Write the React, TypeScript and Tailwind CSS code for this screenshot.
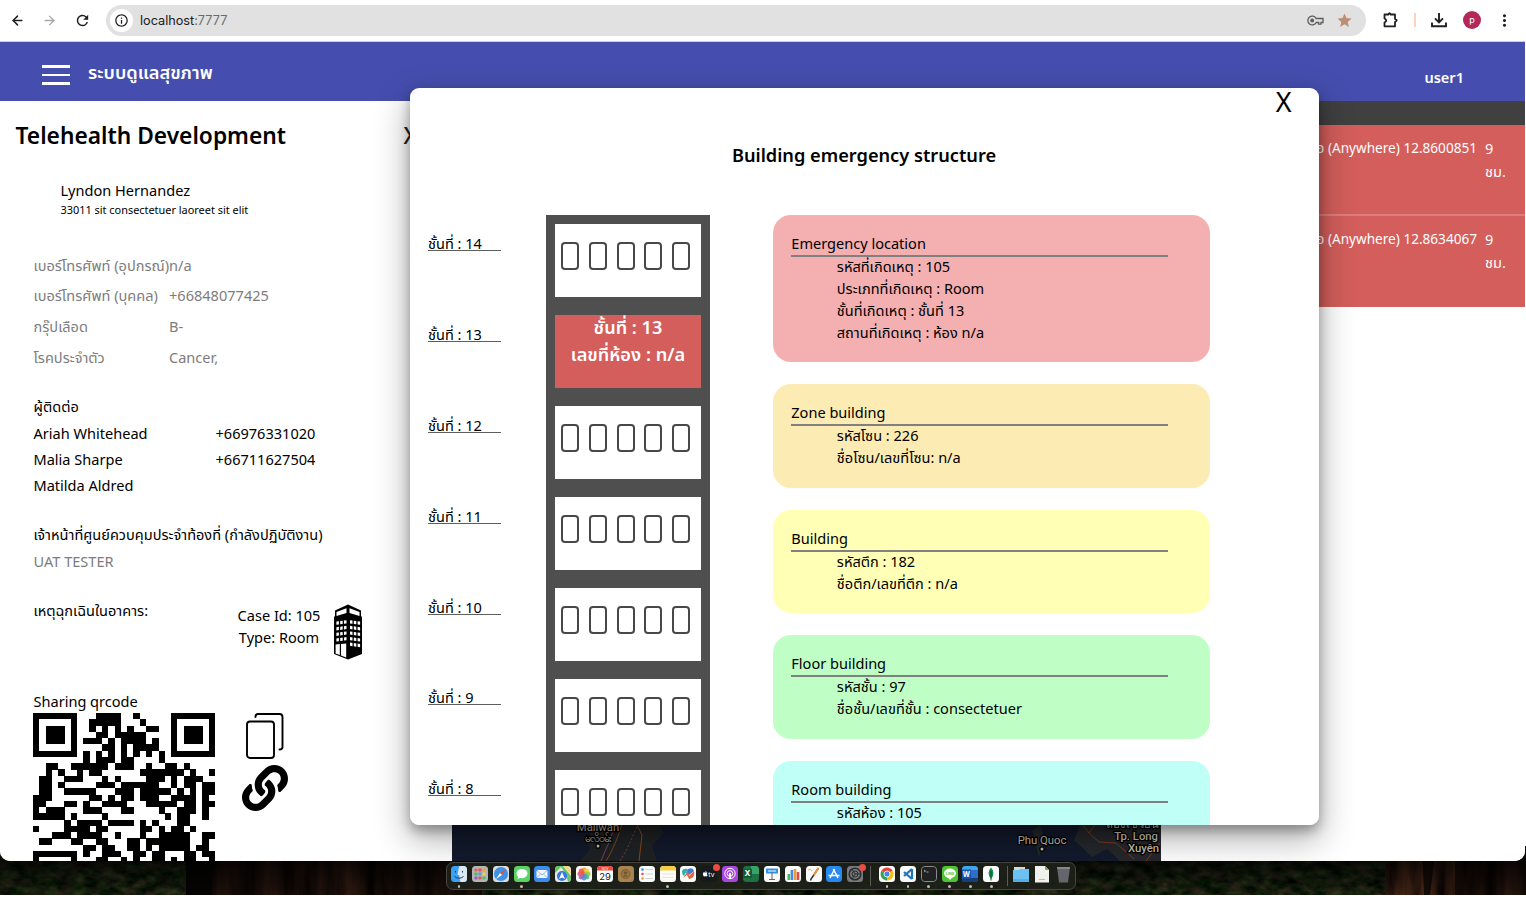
import React from "react";
import { ArrowLeft, ArrowRight } from "lucide-react";
import { MdRefresh, MdStar, MdMoreVert, MdInfoOutline } from "react-icons/md";
import { FaLink, FaApple } from "react-icons/fa";

const FLOORS = [14, 13, 12, 11, 10, 9, 8];

const DETAILS = [
  { title: "Emergency location", color: "bg-[#f4b0b0]", items: ["รหัสที่เกิดเหตุ : 105", "ประเภทที่เกิดเหตุ : Room", "ชั้นที่เกิดเหตุ : ชั้นที่ 13", "สถานที่เกิดเหตุ : ห้อง n/a"] },
  { title: "Zone building", color: "bg-[#fcebb3]", items: ["รหัสโซน : 226", "ชื่อโซน/เลขที่โซน: n/a"] },
  { title: "Building", color: "bg-[#ffffb5]", items: ["รหัสตึก : 182", "ชื่อตึก/เลขที่ตึก : n/a"] },
  { title: "Floor building", color: "bg-[#bfffc6]", items: ["รหัสชั้น : 97", "ชื่อชั้น/เลขที่ชั้น : consectetuer"] },
  { title: "Room building", color: "bg-[#bffff7]", items: ["รหัสห้อง : 105", "ชื่อห้อง/เลขที่ห้อง : n/a"] },
];

const PROFILE = [
  ["เบอร์โทรศัพท์ (อุปกรณ์)", "n/a"],
  ["เบอร์โทรศัพท์ (บุคคล)", "+66848077425"],
  ["กรุ๊ปเลือด", "B-"],
  ["โรคประจำตัว", "Cancer,"],
];

const CONTACTS = [
  ["Ariah Whitehead", "+66976331020"],
  ["Malia Sharpe", "+66711627504"],
  ["Matilda Aldred", ""],
];

const QR_ROWS: string[] = [
  "#######...####..#.....#######",
  "#.....#..#####...#....#.....#",
  "#.###.#..#.#.#.#..##..#.###.#",
  "#.###.#...##.#####....#.###.#",
  "#.###.#.###.#.####.#..#.###.#",
  "#.....#....##.#.####..#.....#",
  "#######.#.#.#.#.#.#.#.#######",
  "........#.###.##....#........",
  "..##..######.###..#..##.#....",
  "..#.#..#.##......#######.#..#",
  ".##..###...#.#....###.#.###..",
  ".##.#.....###.######..#.##.##",
  ".##..#####...###.#####.#.#.##",
  "###......##.#.##.###..####.#.",
  "##...##.#..####...#####.##.##",
  "#.###...###...##....#..###.#.",
  "#####.#....#.........#.##..#.",
  ".....#.####.####.#.#...##....",
  "#....####.##.....##.#.##.#...",
  "...###.####..#...#..#####..##",
  ".##...##..##...##.#######..#.",
  "........##.##..##.#.#####.##.",
  "#######.#..###..##.##...##.##",
  "#.....#...##..#.#..##.#.##..#",
];

function Toolbar() {
  return (
    <div className="flex h-[42px] shrink-0 items-center border-b border-[#cfcfd4] bg-white pb-px text-[#1f1f1f]">
      <ArrowLeft className="ml-[10px]" size={15} strokeWidth={2.4} />
      <ArrowRight className="ml-[17px] text-[#a8a8a8]" size={15} strokeWidth={2.2} />
      <MdRefresh className="ml-[17px]" size={17} />
      <div className="ml-[15px] flex h-[31px] w-[1260px] shrink-0 items-center rounded-full bg-[#e1e1e1] pr-[13px] pl-[4px]">
        <span className="flex size-[23px] items-center justify-center rounded-full bg-white">
          <MdInfoOutline size={15} />
        </span>
        <span className="ml-[7px] pt-px font-['Inter','Noto_Sans',sans-serif] text-[12.7px] text-[#202020]">
          localhost<span className="text-[#6a6a6a]">:7777</span>
        </span>
        <svg className="ml-auto" width="17" height="11" viewBox="0 0 17 11" fill="none" stroke="#5c5c5c" strokeWidth="1.3">
          <path d="M9.2 3.5A4.4 4.4 0 1 0 9.2 7.5H11.6V9.2H14V7.5H16V3.5Z" />
          <circle cx="5.2" cy="5.5" r="1.3" fill="#5c5c5c" />
        </svg>
        <MdStar className="ml-[12px] text-[#bd8f72]" size={17} />
      </div>
      <svg className="ml-[17px] shrink-0" width="16" height="16" viewBox="0 0 16 16" fill="none" stroke="#1f1f1f" strokeWidth="1.8" strokeLinejoin="round">
        <path d="M1.500 2.500H5.300Q6.500 0 7.700 2.500H12V7Q15.500 8 12 10V14.300H1.500V10.500Q5 8.500 1.500 6.500Z" />
      </svg>
      <span className="ml-[15px] h-[14px] w-[2px] bg-[#f9d5bf]" />
      <svg className="ml-[15px] shrink-0" width="16" height="16" viewBox="0 0 16 16" fill="none" stroke="#1f1f1f" strokeWidth="1.9">
        <path d="M8 1V10M4 6.3L8 10.3L12 6.3M1 10.5V14.3H15V10.5" />
      </svg>
      <span className="ml-[16px] flex size-[18px] shrink-0 items-center justify-center rounded-full bg-[#b3285c] font-['Inter',sans-serif] text-[9px] text-white">p</span>
      <MdMoreVert className="ml-[14px] shrink-0" size={19} />
    </div>
  );
}

function Header() {
  return (
    <header className="flex h-[59px] shrink-0 items-center bg-[#454eae] pl-[42px] text-white">
      <div className="flex w-[28px] flex-col gap-[6px] pt-[7px]">
        <span className="h-[2.400px] bg-white" />
        <span className="h-[2.400px] bg-white" />
        <span className="h-[2.400px] bg-white" />
      </div>
      <span className="ml-[18px] pt-[2px] text-[18.2px] font-semibold">ระบบดูแลสุขภาพ</span>
      <span className="mr-[61px] ml-auto pt-[13px] text-[14.56px] font-semibold">user1</span>
    </header>
  );
}

function BuildingIcon() {
  const wins: React.ReactNode[] = [];
  for (let r = 0; r < 5; r++)
    for (let c = 0; c < 3; c++) {
      if (r < 4) wins.push(<path key={`l${r}${c}`} d={`M${2.4 + c * 3.8} ${17.6 + r * 5.6 - c * 0.5}l2.5-.4v3.2l-2.5.4z`} />);
      wins.push(<path key={`r${r}${c}`} d={`M${16 + c * 3.8} ${16.2 + r * 5.6 + c * 0.5}l2.5.4v3.2l-2.5-.4z`} />);
    }
  return (
    <svg width="28" height="56" viewBox="0 0 28 56">
      <path d="M0 13 1 12V6.5L14 .5 27 6.5V12L28 13V50L14 55.5 0 50Z" fill="#000" />
      <g fill="#fff">
        {wins}
        <path d="M2.5 8 12.5 4.2V9L2.5 12ZM25.5 8 15.5 4.2V9L25.5 12Z" />
        <path d="M1.6 40.5 5.8 40V51L1.6 49.4ZM7 40 12.2 39.5V53.5L7 51.5Z" />
      </g>
    </svg>
  );
}

function QrCode() {
  return (
    <svg className="mr-[0.500px] -ml-[0.500px] shrink-0" width="182" height="150.6" viewBox="0 0 29 24" preserveAspectRatio="none" shapeRendering="crispEdges">
      {QR_ROWS.map((row, y) =>
        row.split("").map((cell, x) => (cell === "#" ? <rect key={`${x}-${y}`} x={x} y={y} width="1.02" height="1.02" /> : null)),
      )}
    </svg>
  );
}

function PatientPanel() {
  return (
    <aside className="flex h-full w-[452px] shrink-0 flex-col overflow-hidden bg-white pl-[33.5px] text-[14.56px] text-black">
      <div className="-ml-[18px] flex h-[40px] shrink-0 items-center justify-between pt-[30px] pr-[34.500px]">
        <h1 className="text-[22.75px] font-semibold">Telehealth Development</h1>
        <span className="text-[22.8px] font-medium text-[#222]">X</span>
      </div>
      <div className="ml-[27px] pt-[39px]">
        <p className="leading-[21px]">Lyndon Hernandez</p>
        <p className="text-[10.92px] leading-[17px]">33011 sit consectetuer laoreet sit elit</p>
      </div>
      <div className="pt-[32px] text-[#7d7d7d]">
        {PROFILE.map(([label, value]) => (
          <div key={label} className="flex h-[30.9px] items-center whitespace-nowrap">
            <span className="w-[135.5px]">{label}</span>
            <span>{value}</span>
          </div>
        ))}
      </div>
      <div className="pt-[19.500px]">
        <p className="h-[27.300px] leading-[26.3px]">ผู้ติดต่อ</p>
        {CONTACTS.map(([name, phone]) => (
          <div key={name} className="flex h-[26.3px] items-center">
            <span className="w-[182px]">{name}</span>
            <span>{phone}</span>
          </div>
        ))}
      </div>
      <div className="pt-[22px] leading-[26.3px]">
        <p>เจ้าหน้าที่ศูนย์ควบคุมประจำท้องที่ (กำลังปฏิบัติงาน)</p>
        <p className="text-[#7d7d7d]">UAT TESTER</p>
      </div>
      <div className="flex pt-[30.300px]">
        <span className="w-[204px] leading-[12.500px]">เหตุฉุกเฉินในอาคาร:</span>
        <div className="w-[83px] text-center leading-[22px]">
          <p>Case Id: 105</p>
          <p>Type: Room</p>
        </div>
        <div className="ml-[13px]">
          <BuildingIcon />
        </div>
      </div>
      <p className="h-[53px] shrink-0 pt-[29.500px] leading-[22px]">Sharing qrcode</p>
      <div className="flex">
        <QrCode />
        <div className="flex flex-col pl-[26.500px]">
          <svg className="ml-[4px]" width="38" height="47" viewBox="0 0 38 47" fill="none" stroke="#000" strokeWidth="1.9" strokeLinecap="round">
            <rect x="1" y="8.5" width="27" height="36.5" rx="3" />
            <path d="M9.5 4V3.5Q9.500 1 12 1H33.500Q36.500 1 36.500 4V34Q36.500 36.500 33.500 36.500" />
          </svg>
          <FaLink className="mt-[5px]" size={46} />
        </div>
      </div>
    </aside>
  );
}

function AlertRow({ text }: { text: string }) {
  return (
    <div className="flex h-[91px] justify-end border-b-2 border-[#dc7e7c] bg-[#d35e5b] pt-[12px] pr-[19px] leading-[22.5px] text-white last:border-[#d35e5b]">
      <span className="mr-[8px] text-[13.600px] whitespace-nowrap">{text}</span>
      <span className="w-[21px]">9 ชม.</span>
    </div>
  );
}

function MapStrip() {
  return (
    <svg className="block" width="709" height="136" viewBox="0 0 709 136" fontFamily="Roboto, 'Noto Sans', sans-serif">
      <rect width="709" height="136" fill="#121a2c" />
      <path d="M145 100Q132 110 138 124L128 136H205L200 120 212 108 205 96Z" fill="#1f2224" />
      <path d="M630 96H709V136H668L655 124 640 132 622 115Z" fill="#25272b" />
      <path d="M580 105L588 100 592 112 587 132Z" fill="#23282b" />
      <g fill="none" strokeWidth="1">
        <path d="M165 96Q157 118 149 136" stroke="#7c3f63" />
        <path d="M171 96Q164 120 154 136" stroke="#834522" />
        <path d="M186 98Q178 120 168 136" stroke="#744553" strokeDasharray="2 2" />
        <path d="M184 98L190 110 187 136" stroke="#8c4a20" />
        <path d="M628 96L637 108 647 117 664 118 682 134M637 108L646 96M694 136L708 118" stroke="#7d3b20" />
      </g>
      <g fill="#c4beae" stroke="#000" strokeWidth="2.5" paintOrder="stroke" fontSize="11.300">
        <text x="146" y="105.500" textAnchor="middle">Maliwan</text>
        <text x="146" y="116.500" textAnchor="middle" fontSize="10.500">မလိဝမ်း</text>
        <text x="590" y="119" textAnchor="middle">Phu Quoc</text>
        <text x="707" y="103" textAnchor="end" fontWeight="500">ลองเซวียน</text>
        <text x="706" y="115" textAnchor="end" fontWeight="500">Tp. Long</text>
        <text x="707" y="126.500" textAnchor="end" fontWeight="500">Xuyên</text>
        <circle cx="146" cy="121" r="1.5" />
        <circle cx="590" cy="124" r="1.5" />
      </g>
    </svg>
  );
}

function Dashboard() {
  return (
    <section className="flex min-w-0 flex-1 flex-col bg-white text-[14.56px]">
      <div className="h-[24px] shrink-0 bg-[#404040]" />
      <div>
        <AlertRow text="ขอความช่วยเหลือ (Anywhere) 12.8600851" />
        <AlertRow text="ขอความช่วยเหลือ (Anywhere) 12.8634067" />
      </div>
      <div className="mt-auto">
        <MapStrip />
      </div>
    </section>
  );
}

function Floor({ n }: { n: number }) {
  return (
    <div className="h-[90.9px] px-[9px] pt-[9px]">
      {n === 13 ? (
        <div className="h-[73px] bg-[#d35e5b] text-center text-[18.2px] font-semibold text-white">
          <p className="leading-[25px]">ชั้นที่ : 13</p>
          <p className="leading-[28.500px]">เลขที่ห้อง : n/a</p>
        </div>
      ) : (
        <div className="flex h-[73px] gap-[9.6px] bg-white pt-[18px] pl-[6.400px]">
          {[0, 1, 2, 3, 4].map((i) => (
            <span key={i} className="h-[28px] w-[18px] rounded-[4px] border-2 border-[#484848]" />
          ))}
        </div>
      )}
    </div>
  );
}

function BuildingDialog() {
  return (
    <div className="absolute top-[88px] left-[409.500px] flex h-[737px] w-[909px] flex-col overflow-hidden rounded-[9px] bg-white text-[14.56px] text-black">
      <div className="h-[29px] shrink-0 pr-[27px] text-right text-[27px] leading-[27px]">X</div>
      <h2 className="pt-[24px] text-center text-[18.2px] leading-[28px] font-semibold">Building emergency structure</h2>
      <div className="flex pt-[46.200px] pl-[18.500px]">
        <div className="w-[118px] pt-[18px]">
          {FLOORS.map((n) => (
            <div key={n} className="h-[90.85px]">
              <p className="h-[18px] w-[72.500px] border-b border-[#5e5e5e] leading-[20px]">ชั้นที่ : {n}</p>
            </div>
          ))}
        </div>
        <div className="w-[164px] bg-[#4f4f4f]">
          {FLOORS.map((n) => (
            <Floor key={n} n={n} />
          ))}
        </div>
        <div className="flex flex-col gap-[22px] pl-[63px]">
          {DETAILS.map((d) => (
            <div key={d.title} className={`w-[436.500px] rounded-[18px] px-[18.300px] pt-[18px] pb-[18.700px] ${d.color}`}>
              <p className="h-[23.800px] w-[376.500px] border-b-2 border-[#808080] leading-[20.600px]">{d.title}</p>
              <div className="-mt-[0.600px] pl-[45.500px] leading-[21.800px]">
                {d.items.map((item) => (
                  <p key={item}>{item}</p>
                ))}
              </div>
            </div>
          ))}
        </div>
      </div>
    </div>
  );
}

function Wallpaper() {
  return (
    <svg className="absolute top-[846px] left-0" width="1526" height="49" viewBox="0 0 1526 49">
      <defs>
        <filter id="leaves" x="0" y="0" width="100%" height="100%" colorInterpolationFilters="sRGB">
          <feTurbulence type="fractalNoise" baseFrequency="0.07 0.12" numOctaves="5" seed="7" />
          <feColorMatrix values="0.42 0 0 0 -0.11  0.3 0.17 0 0 -0.1  0.24 0 0 0 -0.06  0 0 0 0 1" />
        </filter>
        <filter id="bark" x="0" y="0" width="100%" height="100%" colorInterpolationFilters="sRGB">
          <feTurbulence type="fractalNoise" baseFrequency="0.05 0.008" numOctaves="4" seed="3" />
          <feColorMatrix values="0.8 0 0 0 -0.13  0.45 0 0 0 -0.08  0.28 0 0 0 -0.05  0 0 0 0 1" />
        </filter>
        <linearGradient id="shade" x1="0" x2="0" y1="0" y2="1">
          <stop offset="0.3" stopColor="#000" stopOpacity="0.75" />
          <stop offset="1" stopColor="#000" stopOpacity="0.15" />
        </linearGradient>
        <linearGradient id="trunk" x1="0" x2="1" y1="0" y2="0">
          <stop offset="0" stopColor="#000" stopOpacity="0.75" />
          <stop offset="0.35" stopColor="#000" stopOpacity="0.4" />
          <stop offset="1" stopColor="#000" stopOpacity="0.75" />
        </linearGradient>
      </defs>
      <rect width="1526" height="49" filter="url(#leaves)" />
      <rect x="186" width="30" height="49" fill="#070504" />
      <rect x="212" width="270" height="49" filter="url(#bark)" />
      <rect x="212" width="270" height="49" fill="url(#trunk)" />
      <rect x="1385" width="141" height="49" filter="url(#bark)" />
      <path d="M1422 0H1436L1430 49H1424Z" fill="#050403" opacity="0.8" />
      <rect x="1455" width="71" height="49" fill="#000" opacity="0.6" />
      <rect width="1526" height="49" fill="url(#shade)" />
    </svg>
  );
}

type DockItem = { bg: string; art?: React.ReactNode; dot?: boolean; badge?: boolean };

const petals = ["#f79b2e", "#f2d03b", "#9ccb4b", "#4bb98c", "#4a93d8", "#8b6cc1", "#d85a8a", "#ec5a43"];

const APPS: DockItem[] = [
  { bg: "#3aa0f2", dot: true, art: <><path d="M8.500 0H16V16H9.500Q8 12 8.200 9H6.500Q7 4 8.500 0Z" fill="#dbe9f5" /><path d="M4.500 5v1.500M11.500 5v1.500M3.500 10.500Q8 14 12.500 10.500" stroke="#173a5e" fill="none" /></> },
  { bg: "#b4b4b6", art: <>{["#e6654f", "#e95147", "#f2a33a", "#56b85b", "#4f9de0", "#f3d13f", "#8d62c9", "#e05a4f", "#4fbf68"].map((c, i) => <rect key={c} x={2.500 + (i % 3) * 4} y={2.500 + Math.floor(i / 3) * 4} width="3" height="3" rx=".7" fill={c} />)}</> },
  { bg: "#d8dde2", art: <><circle cx="8" cy="8" r="7" fill="#3d92e6" /><path d="M13 3 9 9 7 7Z" fill="#e9493f" /><path d="M3 13 7 7 9 9Z" fill="#fff" /></> },
  { bg: "#5cd264", dot: true, art: <><ellipse cx="8" cy="7.600" rx="5.500" ry="4.600" fill="#fff" /><path d="M4.500 10 3.500 13 7 11.500" fill="#fff" /></> },
  { bg: "#3c8cee", art: <><rect x="2.500" y="4" width="11" height="8" rx="1.500" fill="#f2f6fb" /><path d="M3 4.700 8 9 13 4.700M3 11.500 6.500 8M13 11.500 9.500 8" stroke="#8ca9c8" fill="none" strokeWidth=".8" /></> },
  { bg: "#e8e6de", art: <><path d="M0 0H7L0 7Z" fill="#5fc768" /><path d="M8 0 16 10V16H13Q11 6 5 0Z" fill="#65c671" /><path d="M9 0H12L16 5V8Z" fill="#f5d365" /><circle cx="7" cy="10" r="5" fill="#3578de" /><path d="M7 6 10 13 7 11.500 4 13Z" fill="#fff" /></> },
  { bg: "#f7f7f7", art: <>{petals.map((c, i) => <ellipse key={c} cx="8" cy="4.700" rx="2.400" ry="3.300" fill={c} opacity=".9" transform={`rotate(${i * 45} 8 8)`} />)}</> },
  { bg: "#ffffff", art: <><rect width="16" height="4.500" fill="#e94b41" /><text x="8" y="13.800" fontSize="9.500" textAnchor="middle" fill="#222" fontFamily="Inter, sans-serif">29</text><text x="8" y="3.600" fontSize="3" textAnchor="middle" fill="#fff" fontFamily="Inter, sans-serif">NOV</text></> },
  { bg: "#a8834f", art: <><circle cx="7.500" cy="8" r="4.500" fill="#977341" stroke="#6f532c" strokeWidth=".6" /><circle cx="7.500" cy="6.800" r="1.500" fill="#6f532c" /><path d="M5 10.500Q7.500 7.500 10 10.500" fill="#6f532c" /></> },
  { bg: "#fbfbfb", art: <>{["#3f8cf0", "#ec5249", "#f29a37"].map((c, i) => <g key={c}><circle cx="3.500" cy={3.500 + i * 4.500} r="1.300" fill={c} /><path d={`M6.500 ${3.500 + i * 4.500}H14`} stroke="#c8c8c8" strokeWidth=".8" /></g>)}</> },
  { bg: "#fbfaf4", dot: true, art: <><rect width="16" height="4.500" fill="#f8cd46" /><path d="M2 8H14M2 11.500H14" stroke="#ddd" strokeWidth=".7" /></> },
  { bg: "#fdfdfd", art: <><path d="M2 5Q3 2 8 3L4 10Q2 9 2 5Z" fill="#2cb3ab" /><path d="M8 3Q13 1 14 5L9 9 6 7Z" fill="#3e7cd8" /><path d="M3 12 8 5 9 10 14 5Q15 10 12 12L9 13 7 9Z" fill="#e8643a" /></> },
  { bg: "#151a1c", badge: true, art: <><FaApple x="1" y="4.500" size={6.500} color="#fff" /><text x="7.300" y="10.800" fontSize="6.800" fill="#fff" fontFamily="Inter, sans-serif">tv</text></> },
  { bg: "#a747df", art: <g fill="none" stroke="#fff"><circle cx="8" cy="7.500" r="5.200" /><circle cx="8" cy="7.500" r="2.800" /><path d="M8 7V13" strokeWidth="2" /></g> },
  { bg: "#1e7145", art: <><rect x="8" width="8" height="8" fill="#35a36a" /><rect y="3" width="9" height="9" fill="#125c34" /><text x="4.500" y="10.300" fontSize="8" textAnchor="middle" fontWeight="700" fill="#fff" fontFamily="Inter, sans-serif">X</text></> },
  { bg: "#fafafa", art: <><rect x="2" y="2.500" width="12" height="5" fill="#2f93e8" /><path d="M8 3V13M5 13.500H11" stroke="#666" /><path d="M4 5H12" stroke="#fff" /></> },
  { bg: "#fafafa", art: <><rect x="2.500" y="8" width="2.600" height="6" fill="#4abb57" /><rect x="5.600" y="4" width="2.600" height="10" fill="#3d92e6" /><rect x="8.700" y="3" width="2.600" height="11" fill="#f09b36" /><rect x="11.700" y="6" width="2.600" height="8" fill="#e04c48" /></> },
  { bg: "#fafafa", art: <><path d="M12.500 2 5 13 4.500 14.500" stroke="#333" strokeWidth="1.500" /><path d="M12.500 2 8 9" stroke="#ef9636" strokeWidth="2" /><path d="M2 4Q5 2 6 5" stroke="#f1ac5c" fill="none" /></> },
  { bg: "#2788ee", art: <path d="M8.700 3 4 12M7.300 3 12 12M2.500 9.500H13.500" stroke="#fff" strokeWidth="1.500" fill="none" /> },
  { bg: "#77797d", badge: true, art: <g fill="none" stroke="#2b2c2f"><circle cx="8" cy="8" r="5.800" strokeWidth="1.500" /><circle cx="8" cy="8" r="3" /><path d="M8 8H14M8 8 5 3M8 8 5 13" /></g> },
];

const RUNNING: DockItem[] = [
  { bg: "#fafafa", dot: true, art: <><path d="M8 8 2.400 4.800A6.500 6.500 0 0 1 13.600 4.800Z" fill="#e64235" /><path d="M8 8 13.600 4.800A6.500 6.500 0 0 1 8 14.500Z" fill="#fabb07" /><path d="M8 8 8 14.500A6.500 6.500 0 0 1 2.400 4.800Z" fill="#34a552" /><circle cx="8" cy="8" r="3" fill="#4285f3" stroke="#fff" strokeWidth=".8" /></> },
  { bg: "#fafafa", dot: true, art: <path d="M12 3 4 10M12 13 4 6M12 3V13" stroke="#2274b8" strokeWidth="2.200" fill="none" /> },
  { bg: "#202123", dot: true, art: <><rect x=".5" y=".5" width="15" height="15" rx="3" fill="none" stroke="#8b8b8b" /><path d="M3 4 4.500 5 3 6M5.500 6H7.500" stroke="#ddd" strokeWidth=".7" fill="none" /></> },
  { bg: "#50c332", dot: true, art: <><ellipse cx="8" cy="7.300" rx="6" ry="4.800" fill="#fff" /><path d="M5.500 11 8 14 10.500 11Z" fill="#fff" /><text x="8" y="8.700" fontSize="3.800" fontWeight="700" textAnchor="middle" fill="#50c332" fontFamily="Inter, sans-serif">LINE</text></> },
  { bg: "#2b6fc9", dot: true, art: <><rect width="16" height="4" fill="#41a5ee" /><rect y="12" width="16" height="4" fill="#153d7c" /><rect y="3.500" width="9" height="9" fill="#1b56ae" /><text x="4.500" y="10.700" fontSize="7" fontWeight="700" textAnchor="middle" fill="#fff" fontFamily="Inter, sans-serif">W</text></> },
  { bg: "#fafafa", dot: true, art: <><path d="M8 1.500Q13 7 8 13Q3 7 8 1.500Z" fill="#168a4f" /><path d="M8 5V14.500" stroke="#0a5a38" /></> },
];

function DockIcon({ item }: { item: DockItem }) {
  return (
    <div className="relative flex w-[20.87px] flex-col items-center">
      <svg width="16" height="16" viewBox="0 0 16 16" className="rounded-[3.500px]">
        <rect width="16" height="16" fill={item.bg} />
        {item.art}
      </svg>
      {item.dot && <span className="mt-[3px] size-[2.500px] rounded-full bg-[#bdbdb7]" />}
      {item.badge && <span className="absolute -top-[2px] right-0 size-[7px] rounded-full bg-[#ea4b42]" />}
    </div>
  );
}

function Dock() {
  return (
    <div className="absolute top-[862px] left-[446px] flex h-[28px] w-[630px] rounded-[7px] border border-[#45463f] bg-[#1e2119]/90 pt-[3px] pl-[1.500px]">
      {APPS.map((item, i) => (
        <DockIcon key={i} item={item} />
      ))}
      <span className="mr-[5.200px] ml-[4.700px] h-[20px] w-px bg-[#5a5c55]" />
      {RUNNING.map((item, i) => (
        <DockIcon key={i} item={item} />
      ))}
      <span className="mr-[3.500px] ml-[5px] h-[20px] w-px bg-[#5a5c55]" />
      <svg width="62" height="17" viewBox="0 0 62 17">
        <path d="M3 1H14V5H3Z" fill="#d9d9d4" />
        <path d="M2 4H8L9 3H18V16H2Z" fill="#6cc1f3" />
        <path d="M2 13H18V16H2Z" fill="#57aee4" />
        <path d="M24 0H34L38 4V16.500H24Z" fill="#f0f0ec" />
        <path d="M34 0 38 4H34Z" fill="#8ba84f" />
        <path d="M28 13.500H34" stroke="#bbb" />
        <path d="M46 1H59L57 16.500H48Z" fill="#63676b" />
        <path d="M46 1H59L58.800 3H46.200Z" fill="#85898c" />
      </svg>
    </div>
  );
}

export default function App() {
  return (
    <div className="relative h-[898px] w-[1526px] overflow-hidden bg-white font-['Noto_Sans','Noto_Sans_Thai',sans-serif]">
      <Wallpaper />
      <div className="relative flex h-[861px] w-[1525px] flex-col overflow-hidden rounded-t-[6px] rounded-b-[10px] bg-white">
        <Toolbar />
        <Header />
        <main className="flex min-h-0 flex-1">
          <PatientPanel />
          <Dashboard />
        </main>
        <div className="absolute top-[88px] left-[410px] h-[737px] w-[909px] rounded-[9px] shadow-[0_13px_34px_2px_rgba(0,0,0,0.3),0_6px_12px_rgba(0,0,0,0.3)]" />
        <BuildingDialog />
      </div>
      <Dock />
    </div>
  );
}
